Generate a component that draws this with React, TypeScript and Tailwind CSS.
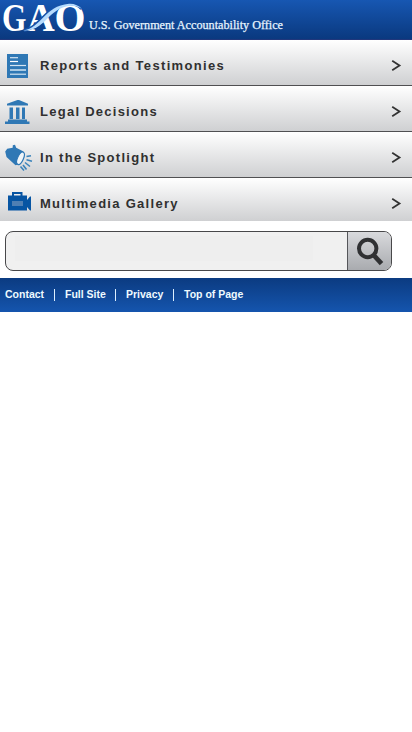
import React from 'react';

function ReportIcon() {
  return (
    <svg className="block h-full w-full" viewBox="0 0 36 44">
      <rect x="7" y="14" width="21" height="24" fill="#2f78b5" />
      <g stroke="#d5e5f2" strokeWidth="1.2">
        <path d="M10 17.700h8" />
        <path d="M10 21.500h8" stroke="#fff" />
        <path d="M10 25.500h16" />
        <path d="M10 30h16" strokeWidth="2" stroke="#a9cae3" />
        <path d="M10 34.200h16" />
      </g>
    </svg>
  );
}

function CourtIcon() {
  return (
    <svg className="block h-full w-full" viewBox="0 0 36 44" fill="#2f78b5">
      <path d="M7 19.5v-1.8L17.5 14h1.5L28 17.700v1.8z" />
      <path d="M9.500 21.500h3.500v11.500h-3.500zM16 21.500h3.500v11.500h-3.500zM22 21.500h3v11.500h-3z" />
      <path d="M8 33.500h19v2h2.500V38H5v-2.500h3z" />
    </svg>
  );
}

function SpotlightIcon() {
  return (
    <svg className="block h-full w-full" viewBox="0 0 36 44">
      <path d="M5.200 19.500L7.200 16.700 12.700 15.800 12.800 13.200 15 12.700 16.200 15.800 23.500 19.500C24 27 20 33 15.500 33.200L6.500 25z" fill="#2f78b5" />
      <ellipse cx="20.500" cy="26.300" rx="2.900" ry="6.700" transform="rotate(24 20.500 26.300)" fill="#f1f5f8" stroke="#2f78b5" strokeWidth="1.200" />
      <g stroke="#3a83bb" strokeWidth="1.600">
        <path d="M26.500 24.500l4.500-.7M26.500 27.800l5.500 1.500M25 30.500l5 4M23 33l3.500 4.500M20.500 34.500l3.500 4" />
      </g>
    </svg>
  );
}

function CameraIcon() {
  return (
    <svg className="block h-full w-full" viewBox="0 0 36 44">
      <path d="M13 19v-4h8.500v4" fill="none" stroke="#0755a3" strokeWidth="2" />
      <path d="M8 17.500h19v4.500l3-3.500h1v14h-1L27 29V32.500H8z" fill="#0755a3" />
      <rect x="12" y="23" width="11" height="5" fill="#4f7fb3" />
    </svg>
  );
}

const rows = [
  { label: 'Reports and Testimonies', Icon: ReportIcon, tracking: 'tracking-[1.340px]' },
  { label: 'Legal Decisions', Icon: CourtIcon, tracking: 'tracking-[1.260px]' },
  { label: 'In the Spotlight', Icon: SpotlightIcon, tracking: 'tracking-[1.300px]' },
  { label: 'Multimedia Gallery', Icon: CameraIcon, tracking: 'tracking-[1.290px]' },
];

export default function App() {
  return (
    <div className="min-h-[732px] w-full bg-white font-['Liberation_Sans',Arial,sans-serif]">
      <header className="h-10 border-b border-[#20377c] bg-gradient-to-b from-[#1757b2] to-[#0a397f]">
        <svg className="block h-[39px] w-[300px] overflow-visible" viewBox="0 0 300 39" fill="#fff">
          <g fontFamily="'Liberation Serif', serif" fontWeight="bold" fontSize="41">
            <text x="2" y="31.300" textLength="24.500" lengthAdjust="spacingAndGlyphs">G</text>
            <text x="26.800" y="31.300" textLength="28" lengthAdjust="spacingAndGlyphs">A</text>
            <text x="54.500" y="31.300" textLength="31" lengthAdjust="spacingAndGlyphs">O</text>
          </g>
          <path d="M24 30.500C42 27 44 6 69 3.800C74 3.500 79 5.500 81.500 9" fill="none" stroke="#1653aa" strokeWidth="3" />
          <path d="M23 30.500C42 28 44 6 69 3.800C74 3.500 79 5.500 82 9C72 2.500 61 6 51 15C42 23.500 37 31 23 30.500z" fill="#b5dbfd" />
          <text x="89" y="29" fontFamily="'Liberation Serif', serif" fontSize="11.800" textLength="194" lengthAdjust="spacingAndGlyphs" fill="#e8f5ff" stroke="#e8f5ff" strokeWidth=".25">
            U.S. Government Accountability Office
          </text>
        </svg>
      </header>
      <nav>
        {rows.map(({ label, Icon, tracking }, i) => (
          <a
            key={label}
            className={`flex items-start bg-gradient-to-b from-white to-[#cfd0d2] ${i === 3 ? 'h-[43px]' : 'h-[46px] border-b border-[#505052]'}`}
          >
            <span className="h-[44px] w-9 shrink-0"><Icon /></span>
            <span className={`ml-1 mt-[18px] flex-1 whitespace-nowrap text-[13px] leading-4 font-bold text-[#303030] ${tracking}`}>{label}</span>
            <svg className="mt-[20px] mr-[10px] h-3 w-3" viewBox="0 0 12 12" fill="none" stroke="#333" strokeWidth="1.800">
              <path d="M2.200 .8l7.300 4.700-7.300 4.700" />
            </svg>
          </a>
        ))}
      </nav>
      <div className="h-[57px] pt-[10px] pl-[5px]">
        <div className="flex h-10 w-[387px] overflow-hidden rounded-[8px] border border-[#48484a] bg-[#f0f0f0]">
          <div className="flex-1 py-1 pl-[9px]"><div className="h-[25px] w-[298px] bg-[#eeeeee]" /></div>
          <div className="w-[44px] border-l border-[#55565a] bg-gradient-to-b from-[#d9dadd] to-[#a9abaf]">
            <svg className="block h-[38px] w-[43px]" viewBox="0 0 43 38" fill="none" stroke="#303133">
              <circle cx="19.700" cy="16.500" r="8.700" strokeWidth="4" />
              <path d="M26 23.500l7.500 8.200" strokeWidth="4.700" />
            </svg>
          </div>
        </div>
      </div>
      <footer className="flex h-[34px] items-center bg-gradient-to-b from-[#0b3b81] to-[#1555ae] pl-[5px] text-[10.500px] font-bold text-[#eefaff]">
        <span className="w-[49px]">Contact</span>
        <i className="mr-[10px] h-[12px] w-px bg-[#dcefff]" />
        <span className="w-[50px] whitespace-nowrap">Full Site</span>
        <i className="mr-[10px] h-[12px] w-px bg-[#dcefff]" />
        <span className="w-[47px]">Privacy</span>
        <i className="mr-[10px] h-[12px] w-px bg-[#dcefff]" />
        <span>Top of Page</span>
      </footer>
    </div>
  );
}
